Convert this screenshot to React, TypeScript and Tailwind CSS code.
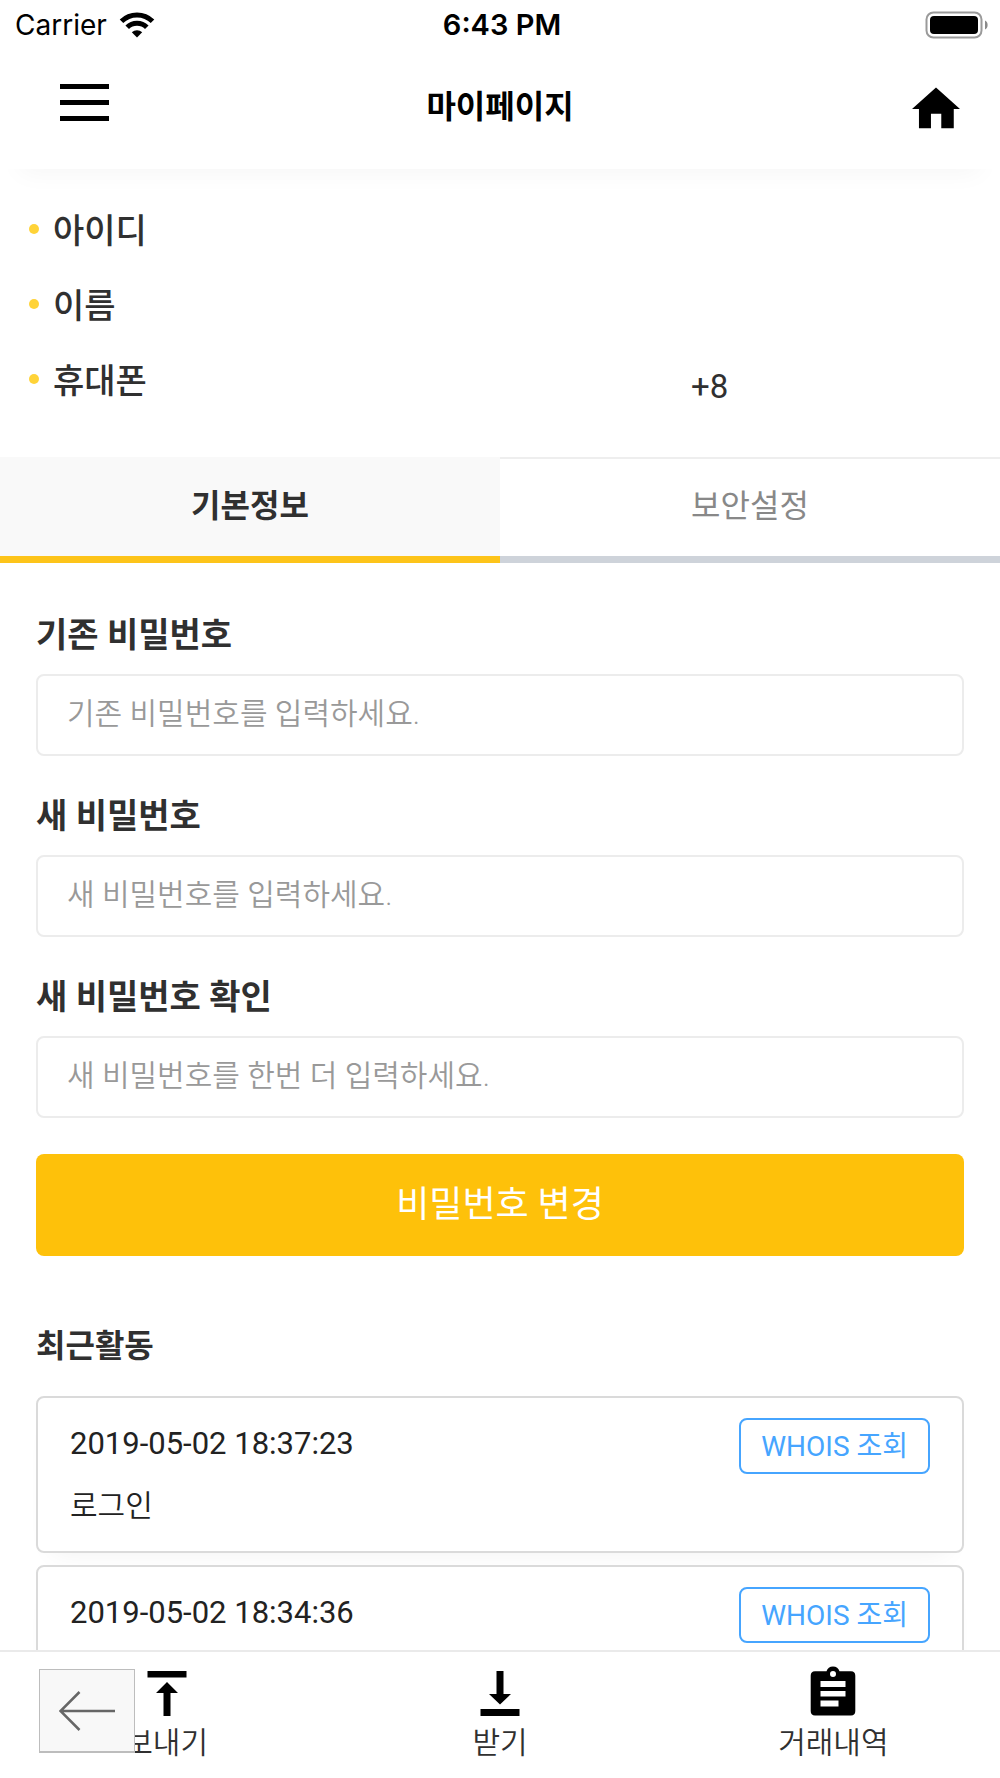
import React, { useState } from 'react';

const tabs = ['기본정보', '보안설정'];

const profile = [
  { label: '아이디', value: '' },
  { label: '이름', value: '' },
  { label: '휴대폰', value: '+8' },
];

const fields = [
  { id: 'current-password', label: '기존 비밀번호', placeholder: '기존 비밀번호를 입력하세요.' },
  { id: 'new-password', label: '새 비밀번호', placeholder: '새 비밀번호를 입력하세요.' },
  { id: 'confirm-password', label: '새 비밀번호 확인', placeholder: '새 비밀번호를 한번 더 입력하세요.' },
];

const activities = [
  { id: 1, date: '2019-05-02 18:37:23', action: '로그인' },
  { id: 2, date: '2019-05-02 18:34:36', action: '로그인' },
];

const SendIcon = () => (
  <svg viewBox="0 0 48 48" className="h-12 w-12" fill="currentColor">
    <path d="M4.500 2h39v6.500h-39zM24 13l11 11h-7.500v23h-7v-23H13z" />
  </svg>
);

const ReceiveIcon = () => (
  <svg viewBox="0 0 48 48" className="h-12 w-12" fill="currentColor">
    <path d="M4.500 40h39v7h-39zM24 35.500l-11-10.500h7.500V2h7v23H35z" />
  </svg>
);

const HistoryIcon = () => (
  <svg viewBox="0 0 48 48" className="h-12 w-12 overflow-visible" fill="currentColor">
    <path
      fillRule="evenodd"
      d="M6 2.300h11.500a6.800 6.800 0 0 1 13 0H42a4.500 4.500 0 0 1 4.300 4.500v35.200a4.500 4.500 0 0 1-4.300 4.500H6A4.500 4.500 0 0 1 1.700 42V6.800A4.500 4.500 0 0 1 6 2.300zM24 2a3 3 0 1 0 0 6 3 3 0 0 0 0-6zM11.500 12v6h25v-6zM11.500 22v5.500h25V22zM11.500 31.500V37.500h18v-6z"
    />
  </svg>
);

const navItems = [
  { label: '보내기', icon: <SendIcon /> },
  { label: '받기', icon: <ReceiveIcon /> },
  { label: '거래내역', icon: <HistoryIcon /> },
];

const StatusBar = () => (
  <div className="grid h-[53px] shrink-0 grid-cols-3 items-center pr-[11px] pb-1 pl-[15px] font-['Inter','Liberation_Sans',sans-serif] text-[28px] leading-[50px] text-black">
    <div className="flex items-center gap-3">
      <span>Carrier</span>
      <svg viewBox="0 0 36 26" className="h-[26px] w-9" fill="none" stroke="currentColor">
        <path d="M2.500 9.200C11 .8 25 .8 33.500 9.200" strokeWidth="5" />
        <path d="M8.200 15.200C13.500 9.800 22.500 9.800 27.800 15.200" strokeWidth="5" />
        <path d="M18 25.500l-5.200-5.300c3-2.700 7.400-2.700 10.400 0z" fill="currentColor" stroke="none" />
      </svg>
    </div>
    <span className="text-center text-[29px] font-semibold">6:43 PM</span>
    <svg viewBox="0 0 64 28" className="h-7 w-16 justify-self-end" fill="none">
      <rect x="1.500" y="1.500" width="55" height="25" rx="7" stroke="#9a9a9a" strokeWidth="2" />
      <rect x="5" y="5" width="48" height="18" rx="4" fill="#000" />
      <path d="M60 9.500c3.500 1.500 3.500 7.500 0 9z" fill="#8a8a8a" />
    </svg>
  </div>
);

const Header = () => (
  <header className="grid h-[116px] shrink-0 grid-cols-3 items-center bg-white px-10 pb-2 text-black shadow-[0_24px_24px_-20px_rgba(0,0,0,0.04)]">
    <button aria-label="메뉴" className="ml-5 flex w-[49px] flex-col gap-[11px] pb-[10px]">
      <span className="h-[5px] w-full bg-black" />
      <span className="h-[5px] w-full bg-black" />
      <span className="h-[5px] w-full bg-black" />
    </button>
    <h1 className="text-center text-[32px] leading-10 font-bold">마이페이지</h1>
    <button aria-label="홈" className="justify-self-end pt-1">
      <svg viewBox="2 2 20 20" className="h-12 w-12" fill="currentColor">
        <path d="M9.900 20v-6h4.300v6h5.200v-8H22L12 3 2 12h2.900v8z" />
      </svg>
    </button>
  </header>
);

export default function App() {
  const [activeTab, setActiveTab] = useState(0);

  return (
    <div className="flex h-screen flex-col overflow-hidden bg-white font-['Roboto','Noto_Sans_CJK_KR',sans-serif] text-[#303030]">
      <StatusBar />
      <Header />

      <main className="min-h-0 flex-1 overflow-y-auto [scrollbar-width:none]">
        <dl className="px-7 pt-6 pb-[39px]">
          {profile.map((row) => (
            <div key={row.label} className="flex h-[75px] items-center">
              <dt className="flex flex-1 items-center text-[34px] leading-[50px] font-medium">
                <span className="mr-[14px] mb-1 ml-px h-[10px] w-[10px] rounded-full bg-[#ffd338]" />
                {row.label}
              </dt>
              <dd className="w-[281px] pt-3 text-[33px] leading-[50px]">{row.value}</dd>
            </div>
          ))}
        </dl>

        <div role="tablist" className="grid grid-cols-2">
          {tabs.map((tab, i) => (
            <button
              key={tab}
              role="tab"
              aria-selected={activeTab === i}
              onClick={() => setActiveTab(i)}
              className={
                activeTab === i
                  ? 'h-[106px] border-t-2 border-b-7 border-t-[#f9f9f9] border-b-[#fdc41a] bg-[#f9f9f9] pb-1 text-[32px] font-bold'
                  : 'h-[106px] border-t-2 border-b-7 border-t-[#eeeeee] border-b-[#ced3da] pb-1 text-[32px] text-[#888888]'
              }
            >
              {tab}
            </button>
          ))}
        </div>

        <div className="px-9 pt-12">
          <form className="flex flex-col" onSubmit={(e) => e.preventDefault()}>
            {fields.map((f) => (
              <div key={f.id} className="mb-9 flex flex-col gap-[15px]">
                <label htmlFor={f.id} className="text-[34px] leading-[48px] font-bold">
                  {f.label}
                </label>
                <input
                  id={f.id}
                  type="password"
                  placeholder={f.placeholder}
                  className="h-[82px] w-full rounded-lg border-2 border-[#ececec] px-[29px] pb-1 text-[30px] font-[350] placeholder:text-[#999999]"
                />
              </div>
            ))}
            <button type="submit" className="h-[102px] rounded-lg bg-[#fec10a] text-[36px] text-white">
              비밀번호 변경
            </button>
          </form>

          <h2 className="mt-[66px] text-[32px] leading-[48px] font-bold">최근활동</h2>

          <ul className="mt-[26px] flex flex-col gap-3 pb-10">
            {activities.map((a) => (
              <li
                key={a.id}
                className="flex items-start justify-between rounded-lg border-2 border-[#dadada] bg-white px-8 py-5 text-[#222222] shadow-[0_16px_24px_-16px_rgba(0,0,0,0.06)]"
              >
                <div className="pt-px">
                  <p className="text-[31px] leading-[50px]">{a.date}</p>
                  <p className="mt-3 text-[30px] leading-[50px] font-[350]">{a.action}</p>
                </div>
                <button className="h-[56px] rounded-lg border-2 border-[#46a5ff] px-5 pt-[2px] text-[28px] text-[#46a5ff]">
                  WHOIS 조회
                </button>
              </li>
            ))}
          </ul>
        </div>
      </main>

      <nav className="relative grid h-[128px] shrink-0 grid-cols-3 border-t-2 border-[#eaeaea] bg-white">
        {navItems.map((item) => (
          <a key={item.label} href="#" className="flex flex-col items-center gap-[6px] pt-[17px] text-black">
            {item.icon}
            <span className="text-[30px] leading-10 font-[350] text-[#303030]">{item.label}</span>
          </a>
        ))}
        <button
          aria-label="뒤로"
          className="absolute top-[17px] left-[39px] flex h-[84px] w-24 items-center justify-center border border-b-2 border-[#bdbdbd] bg-[#f8f8f8]"
        >
          <svg viewBox="0 0 56 40" className="h-10 w-14" fill="none" stroke="#666666" strokeWidth="2.500">
            <path d="M20.500 1L1.500 20l19 19M1.500 20H56" />
          </svg>
        </button>
      </nav>
    </div>
  );
}
